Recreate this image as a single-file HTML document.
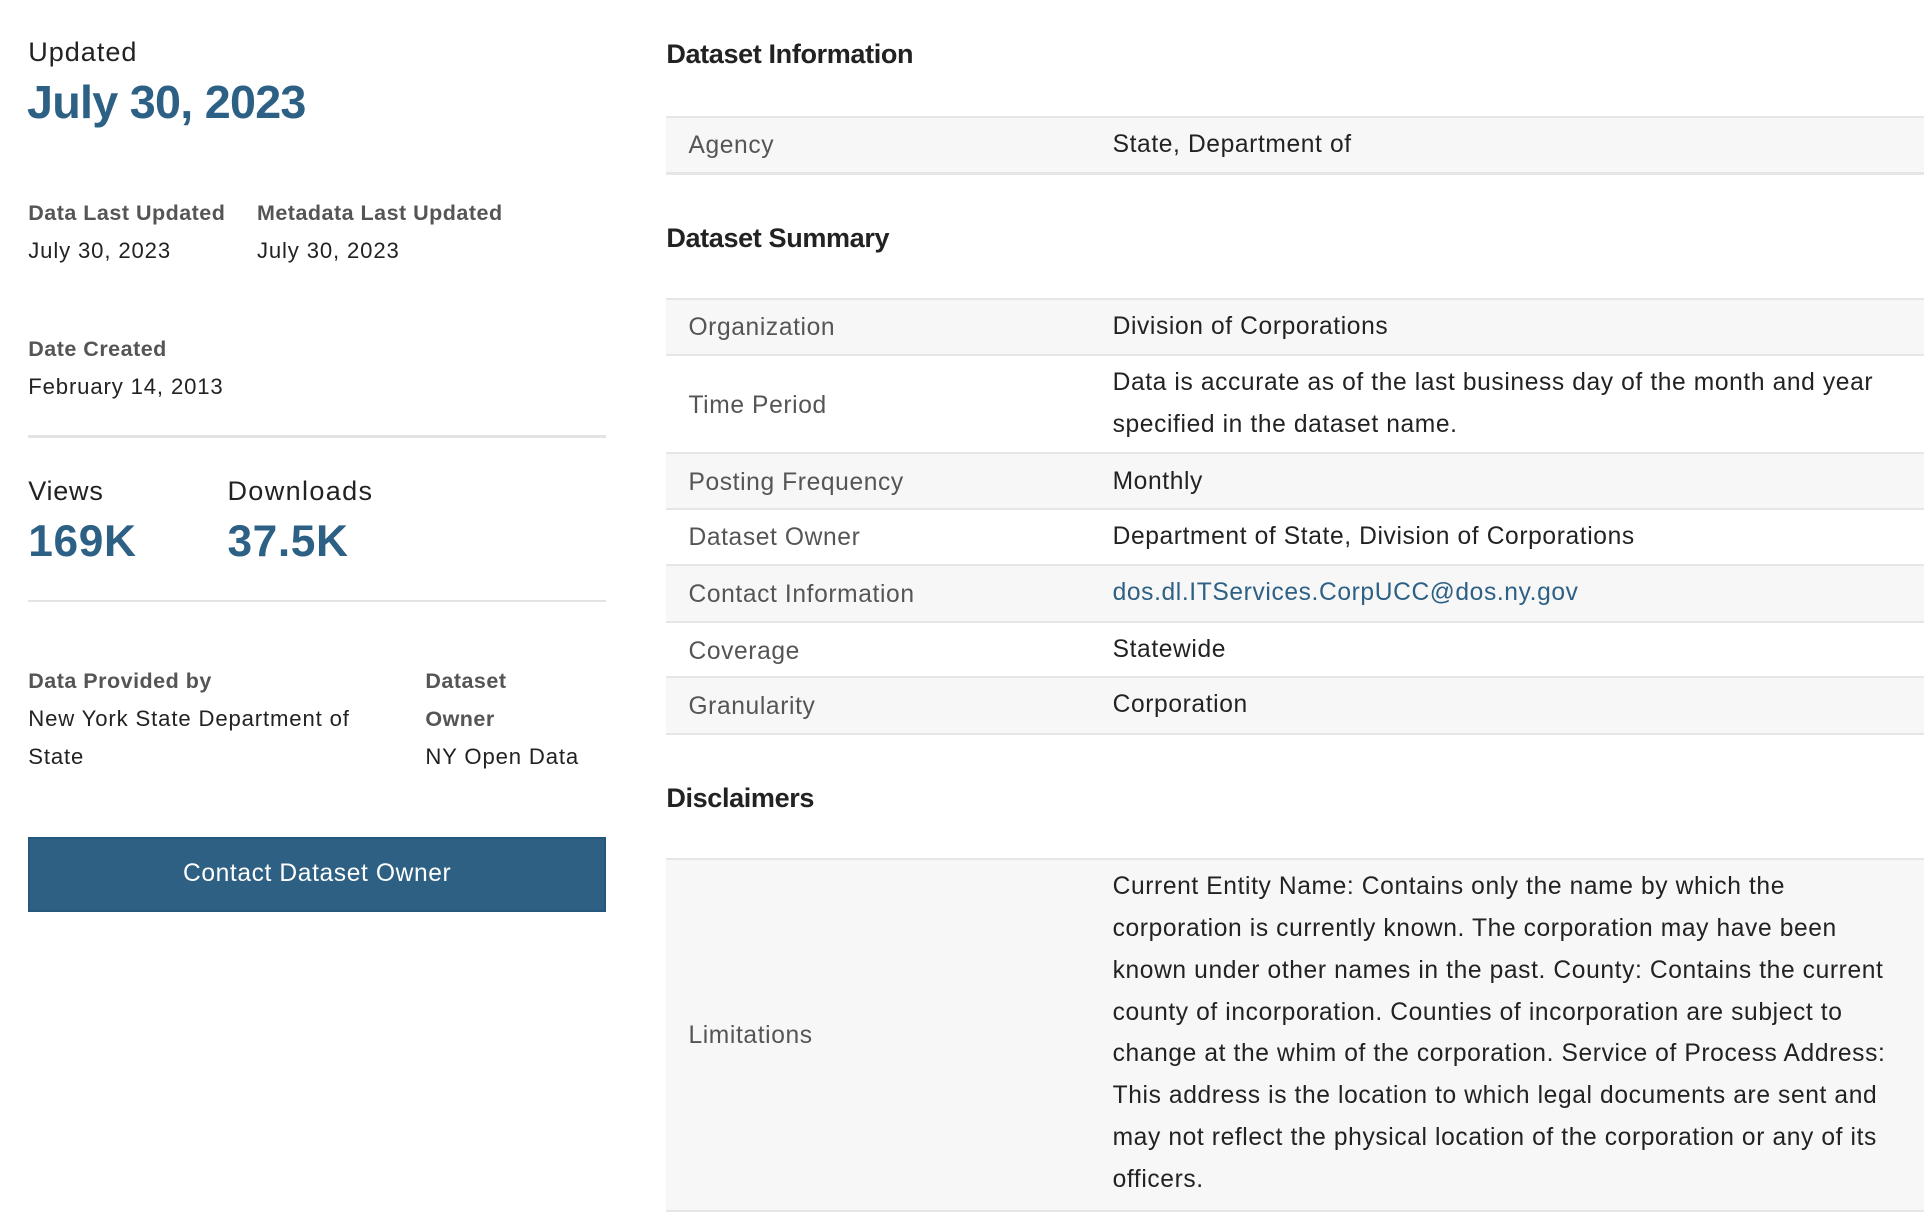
<!DOCTYPE html>
<html><head><meta charset="utf-8"><style>
html,body{margin:0;padding:0;background:#fff;}
body{width:1565px;height:992px;zoom:1.2294;position:relative;overflow:hidden;font-family:"Liberation Sans",Arial,sans-serif;color:#222;}
.a{position:absolute;white-space:nowrap;line-height:1;}
.lbl{font-size:17.5px;font-weight:bold;color:#555;letter-spacing:0.4px;}
.val{font-size:18px;color:#222;letter-spacing:0.7px;}
.blue{color:#2d6085;font-weight:bold;}
.hr{position:absolute;left:23px;width:470px;height:2px;background:#e3e3e3;}
.h{position:absolute;left:542px;font-size:22px;font-weight:bold;color:#222;letter-spacing:-0.3px;}
.row{position:absolute;left:542px;width:1023px;border-top:2px solid #e6e6e6;box-sizing:border-box;font-size:20px;letter-spacing:0.5px;}
.row.g{background:#f7f7f7;}
.row .k{position:absolute;left:18px;color:#555;}
.row .v{position:absolute;left:363px;color:#222;line-height:34px;white-space:nowrap;}
.bot{position:absolute;left:542px;width:1023px;height:2px;background:#e6e6e6;}
</style></head><body>
<div class="a" style="left:23px;top:32px;font-size:22px;letter-spacing:0.8px;">Updated</div>
<div class="a blue" style="left:22px;top:64px;font-size:38px;letter-spacing:-0.6px;">July 30, 2023</div>
<div class="a lbl" style="left:23px;top:165px;">Data Last Updated</div>
<div class="a val" style="left:23px;top:195px;">July 30, 2023</div>
<div class="a lbl" style="left:209px;top:165px;">Metadata Last Updated</div>
<div class="a val" style="left:209px;top:195px;">July 30, 2023</div>
<div class="a lbl" style="left:23px;top:276px;">Date Created</div>
<div class="a val" style="left:23px;top:306px;">February 14, 2013</div>
<div class="hr" style="top:354px;"></div>
<div class="a" style="left:23px;top:389px;font-size:22px;letter-spacing:0.6px;">Views</div>
<div class="a blue" style="left:23px;top:423px;font-size:36px;letter-spacing:0.5px;">169K</div>
<div class="a" style="left:185px;top:389px;font-size:22px;letter-spacing:1.1px;">Downloads</div>
<div class="a blue" style="left:185px;top:423px;font-size:36px;letter-spacing:0.5px;">37.5K</div>
<div class="hr" style="top:488px;"></div>
<div class="a lbl" style="left:23px;top:546px;">Data Provided by</div>
<div class="a val" style="left:23px;top:576px;">New York State Department of</div>
<div class="a val" style="left:23px;top:607px;">State</div>
<div class="a lbl" style="left:346px;top:546px;">Dataset</div>
<div class="a lbl" style="left:346px;top:577px;">Owner</div>
<div class="a val" style="left:346px;top:607px;">NY Open Data</div>
<div style="position:absolute;left:23px;top:681px;width:470px;height:61px;box-sizing:border-box;background:#2e6083;border:2px solid #24577c;color:#fff;font-size:20px;letter-spacing:0.5px;text-align:center;line-height:57px;">Contact Dataset Owner</div>

<div class="h" style="top:32px;">Dataset Information</div>
<div class="row g" style="top:94px;height:46px;"><span class="k" style="top:12px;">Agency</span><span class="v" style="top:5px;">State, Department of</span></div>
<div class="bot" style="top:140px;"></div>

<div class="h" style="top:181px;">Dataset Summary</div>
<div class="row g" style="top:242px;height:46px;"><span class="k" style="top:12px;">Organization</span><span class="v" style="top:5px;">Division of Corporations</span></div>
<div class="row" style="top:288px;height:81px;"><span class="k" style="top:29px;">Time Period</span><span class="v" style="top:5px;">Data is accurate as of the last business day of the month and year<br>specified in the dataset name.</span></div>
<div class="row g" style="top:368px;height:46px;"><span class="k" style="top:12px;">Posting Frequency</span><span class="v" style="top:5px;">Monthly</span></div>
<div class="row" style="top:413px;height:46px;"><span class="k" style="top:12px;">Dataset Owner</span><span class="v" style="top:5px;">Department of State, Division of Corporations</span></div>
<div class="row g" style="top:459px;height:46px;"><span class="k" style="top:12px;">Contact Information</span><span class="v" style="top:5px;color:#2d6085;">dos.dl.ITServices.CorpUCC@dos.ny.gov</span></div>
<div class="row" style="top:505px;height:46px;"><span class="k" style="top:12px;">Coverage</span><span class="v" style="top:5px;">Statewide</span></div>
<div class="row g" style="top:550px;height:46px;"><span class="k" style="top:12px;">Granularity</span><span class="v" style="top:5px;">Corporation</span></div>
<div class="bot" style="top:596px;"></div>

<div class="h" style="top:637px;">Disclaimers</div>
<div class="row g" style="top:698px;height:287px;"><span class="k" style="top:132px;">Limitations</span><span class="v" style="top:5px;">Current Entity Name: Contains only the name by which the<br>corporation is currently known. The corporation may have been<br>known under other names in the past. County: Contains the current<br>county of incorporation. Counties of incorporation are subject to<br>change at the whim of the corporation. Service of Process Address:<br>This address is the location to which legal documents are sent and<br>may not reflect the physical location of the corporation or any of its<br>officers.</span></div>
<div class="bot" style="top:984px;"></div>
</body></html>
